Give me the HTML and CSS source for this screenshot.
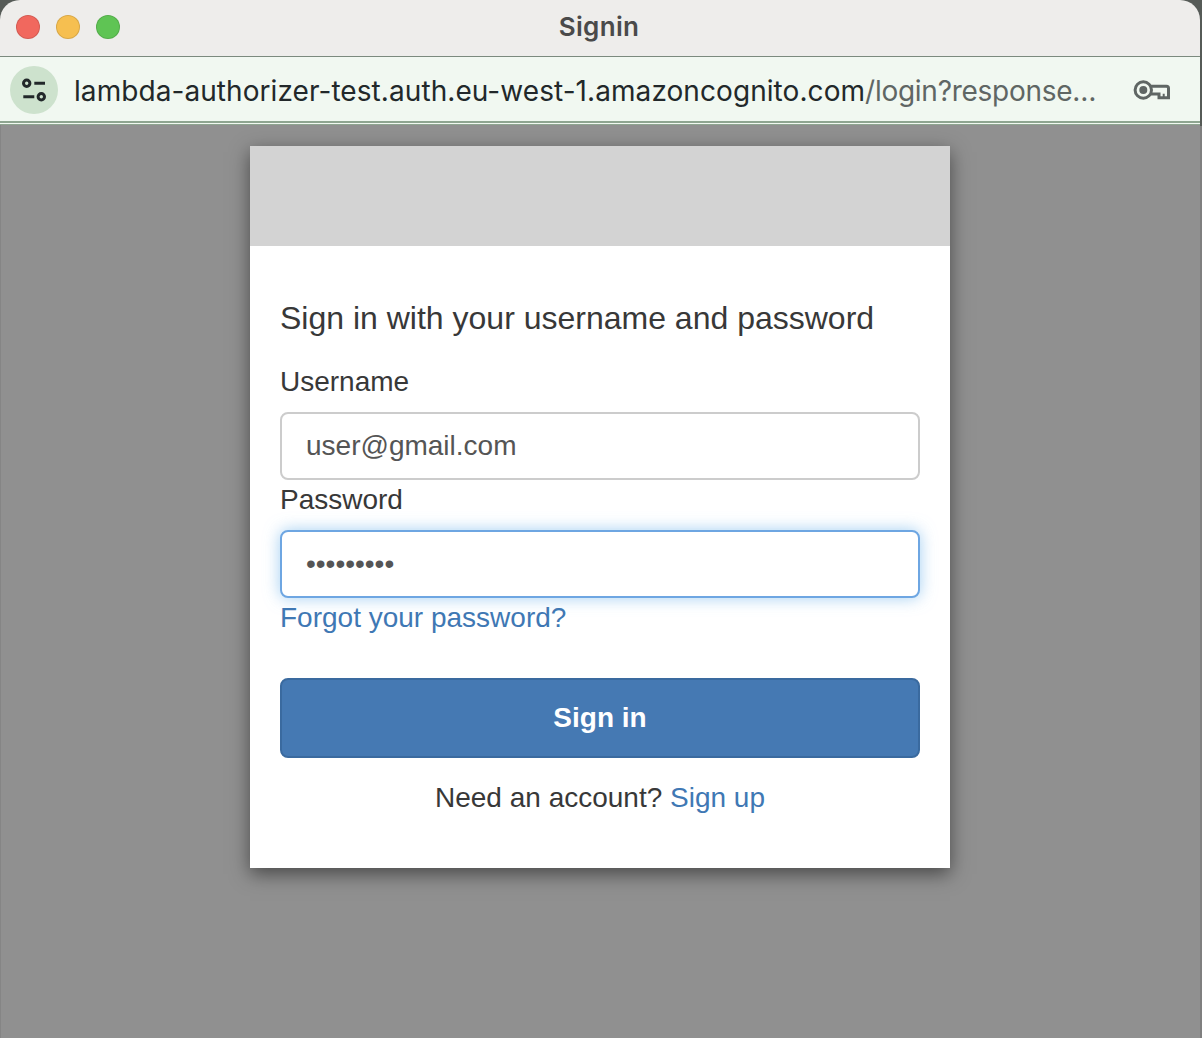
FILE: index.html
```html
<!DOCTYPE html>
<html lang="en">
<head>
    <meta charset="UTF-8">
    <meta name="viewport" content="width=device-width, initial-scale=1.0">
    <title>Signin</title>
    <link rel="stylesheet" href="styles.css">
</head>
<body>
<div class="window">
    <div class="titlebar">
        <div class="traffic">
            <span class="light red"></span>
            <span class="light yellow"></span>
            <span class="light green"></span>
        </div>
        <div class="title">Signin</div>
    </div>
    <div class="urlbar">
        <div class="site-icon">
            <svg width="28" height="28" viewBox="0 0 28 28" fill="none" stroke="#22282a" stroke-width="3">
                <circle cx="6.7" cy="7.3" r="3.2"/>
                <path d="M14.3 7.300h10.700"/>
                <path d="M3.300 20.700h11"/>
                <circle cx="21.300" cy="20.700" r="3.200"/>
            </svg>
        </div>
        <div class="url"><span class="host">lambda-authorizer-test.auth.eu-west-1.amazoncognito.com</span>/login?response…</div>
        <svg class="key" width="38" height="22" viewBox="0 0 38 22" fill="none" stroke="#5f6664" stroke-width="3">
            <circle cx="10.300" cy="11" r="8.200"/>
            <path d="M17.500 7.300h16a2 2 0 0 1 2 2v9.500h-9.500v-3.800h-8"/>
            <path d="M30.700 18.800v-4" stroke-width="2"/>
            <circle cx="10.300" cy="11" r="4" fill="#5f6664" stroke="none"/>
        </svg>
    </div>
    <div class="url-rule"></div>
    <div class="content">
        <div class="card">
            <div class="card-header"></div>
            <form class="card-body">
                <h1>Sign in with your username and password</h1>
                <label class="field-label" for="username">Username</label>
                <input class="field" id="username" type="text" value="user@gmail.com">
                <label class="field-label" for="password">Password</label>
                <input class="field focused" id="password" type="password" value="password1">
                <a class="forgot" href="#">Forgot your password?</a>
                <button class="submit" type="button">Sign in</button>
                <p class="signup">Need an account? <a href="#">Sign up</a></p>
            </form>
        </div>
    </div>
</div>
</body>
</html>
```

FILE: styles.css
```css
* {
    box-sizing: border-box;
}

html, body {
    height: 100%;
}

body {
    margin: 0;
    background: linear-gradient(#565b57 0, #565b57 126px, #7f7f7f 126px);
    font-family: "Liberation Sans", Arial, sans-serif;
    color: #383838;
    overflow: hidden;
}

.window {
    display: flex;
    flex-direction: column;
    height: 100%;
    width: 1200px;
    border-radius: 20px 20px 0 0;
    overflow: hidden;
}

.titlebar {
    position: relative;
    display: flex;
    align-items: center;
    justify-content: center;
    height: 57px;
    flex: none;
    padding-bottom: 3px;
    background: #eeedeb;
    border-bottom: 1px solid #7b8a7e;
}

.traffic {
    position: absolute;
    left: 16px;
    top: 15px;
    display: flex;
    gap: 16px;
}

.light {
    width: 24px;
    height: 24px;
    border-radius: 50%;
    border: 1px solid rgba(0, 0, 0, 0.12);
}

.red { background: #f1685e; }
.yellow { background: #f6bf50; }
.green { background: #5fc454; }

.title {
    font-family: "Inter", sans-serif;
    font-size: 26px;
    font-weight: 600;
    letter-spacing: 0.3px;
    color: #4a4a4a;
    margin-left: -2px;
}

.urlbar {
    display: flex;
    align-items: center;
    height: 66px;
    flex: none;
    padding: 2px 29px 0 10px;
    background: #f1f8f1;
    border-bottom: 2px solid #8ea590;
}

.url-rule {
    height: 2px;
    flex: none;
    background: #f1f8f1;
    border-bottom: 1px solid #8ea590;
}

.site-icon {
    display: flex;
    align-items: center;
    justify-content: center;
    flex: none;
    width: 48px;
    height: 48px;
    border-radius: 50%;
    background: #cde2cd;
}

.url {
    flex: 1;
    margin-left: 16px;
    padding-top: 1px;
    font-family: "Inter", sans-serif;
    font-size: 28px;
    letter-spacing: -0.27px;
    color: #5f6664;
    white-space: nowrap;
}

.host {
    color: #22282a;
    letter-spacing: 0.07px;
}

.key {
    flex: none;
}

.content {
    flex: 1;
    display: flex;
    justify-content: center;
    align-items: flex-start;
    padding-top: 21px;
    background: #909090;
    box-shadow: inset 1px 0 0 #858585;
}

.card {
    width: 700px;
    background: #fff;
    box-shadow: 0 6px 18px rgba(0, 0, 0, 0.5);
}

.card-header {
    height: 100px;
    background: #d3d3d3;
}

.card-body {
    display: flex;
    flex-direction: column;
    padding: 54px 30px 50px;
}

h1 {
    margin: 0 0 26px;
    font-size: 32px;
    font-weight: 400;
    line-height: 36px;
}

.field-label {
    font-size: 28px;
    line-height: 40px;
    margin-bottom: 10px;
}

.field {
    width: 100%;
    height: 68px;
    padding: 0 24px;
    border: 2px solid #ccc;
    border-radius: 8px;
    background: #fff;
    color: #555;
    font-family: "Liberation Sans", Arial, sans-serif;
    font-size: 28px;
    outline: none;
}

.field.focused {
    border-color: #6ea6e2;
    box-shadow: 0 0 16px rgba(102, 175, 233, 0.6);
}

.forgot {
    font-size: 28px;
    line-height: 40px;
}

a {
    color: #3f78b4;
    text-decoration: none;
}

.submit {
    margin-top: 40px;
    height: 80px;
    border: 2px solid #3a6a9f;
    border-radius: 8px;
    background: #4579b3;
    color: #fff;
    font-family: "Liberation Sans", Arial, sans-serif;
    font-size: 28px;
    font-weight: 700;
}

.signup {
    margin: 20px 0 0;
    text-align: center;
    font-size: 28px;
    line-height: 40px;
}
```
